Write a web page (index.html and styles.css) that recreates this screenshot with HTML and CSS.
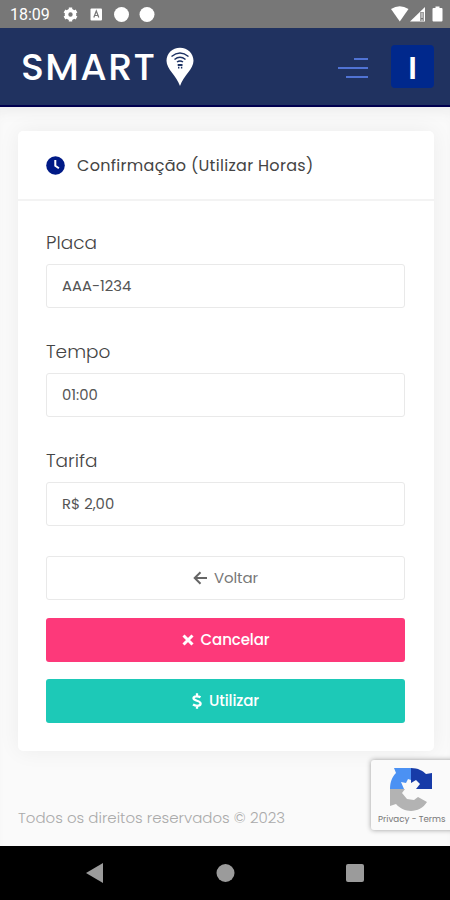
FILE: index.html
```
<!DOCTYPE html>
<html lang="pt-BR">
<head>
<meta charset="utf-8">
<title>Smart - Utilizar Horas</title>
<link rel="stylesheet" href="styles.css">
</head>
<body>
<div class="statusbar">
	<span class="clock">18:09</span>
	<svg class="status-left" width="96" height="28" viewBox="0 0 96 28" fill="#fff">
		<circle cx="10.500" cy="14.500" r="4" fill="none" stroke="#fff" stroke-width="3.600"/>
		<path d="M10.500 7.500v2.500M10.500 19v2.500M4.500 11l2 1.200M14.500 16.800l2 1.200M4.500 18l2-1.200M14.500 12.200l2-1.200" stroke="#fff" stroke-width="3.400"/>
		<rect x="30.500" y="8.500" width="11.500" height="12" rx="1"/>
		<path d="M33.800 17.500l2.500-6.500 2.500 6.500M34.600 15.500h3.400" fill="none" stroke="#777" stroke-width="1.200"/>
		<circle cx="61.500" cy="14.500" r="7.500"/>
		<circle cx="87" cy="14.500" r="7.500"/>
	</svg>
	<svg class="status-right" width="54" height="28" viewBox="0 0 54 28" fill="#fff">
		<path d="M0 9Q8.800 3.500 17.500 9L8.800 21.500z"/>
		<path d="M19 21.500L34 7v14.500z"/>
		<path d="M29.300 12h3.400v9h-3.400z" fill="#777"/>
		<path d="M31 12.500v5.500M31 19.300v1.700" stroke="#fff" stroke-width="1"/>
		<path d="M42.500 8h2V6.500h4V8h2q1 0 1 1v11.500q0 1-1 1h-8q-1 0-1-1V9q0-1 1-1z"/>
	</svg>
</div>

<div class="topbar">
	<span class="brand">SMART</span>
	<svg class="pin" width="28" height="40" viewBox="0 0 28 40">
		<path d="M14 .7C6.300.7.500 6.400.500 13.800.500 22.300 10.300 28.500 14 39c3.700-10.500 13.500-16.700 13.500-25.200C27.500 6.400 21.700.7 14 .7z" fill="#fff"/>
		<path d="M5.500 9.500q8.500-7 17 0M8.500 12.500q5.500-4.500 11 0M11 15q3-2.200 6 0" fill="none" stroke="#1d3263" stroke-width="1.500"/>
		<path d="M11.700 18h4.800M12 20.700h1.400M14.900 20.700h1.400" stroke="#1d3263" stroke-width="1.800"/>
	</svg>
	<svg class="menu" width="30" height="24" viewBox="0 0 30 24" stroke="#5073d4" stroke-width="2">
		<path d="M16 3h14M0 12h30M8 21h22"/>
	</svg>
	<span class="user">I</span>
</div>

<div class="content">
	<div class="card">
		<div class="card-title">
			<svg width="19" height="19" viewBox="0 0 19 19">
				<circle cx="9.500" cy="9.500" r="9.300" fill="#001a86"/>
				<path d="M9.300 4v5.700l3.600 2.600" fill="none" stroke="#fff" stroke-width="2"/>
			</svg>
			<span>Confirmação (Utilizar Horas)</span>
		</div>
		<div class="card-body">
			<label class="label">Placa</label>
			<div class="field">AAA-1234</div>
			<label class="label">Tempo</label>
			<div class="field">01:00</div>
			<label class="label">Tarifa</label>
			<div class="field">R$ 2,00</div>

			<a class="btn back">
				<svg width="14" height="14" viewBox="0 0 14 14" fill="none" stroke="#666" stroke-width="2"><path d="M7.500 1.200L1.700 7l5.800 5.800M2 7h12"/></svg>
				<span>Voltar</span>
			</a>
			<a class="btn cancel">
				<svg width="12" height="12" viewBox="0 0 12 12" stroke="#fff" stroke-width="3"><path d="M1.500 1.500l9 9M10.500 1.500l-9 9"/></svg>
				<span>Cancelar</span>
			</a>
			<a class="btn use">
				<svg width="10" height="16" viewBox="0 0 10 16" fill="none" stroke="#fff" stroke-width="2.300"><path d="M8.500 4.300C6.500 3 1.500 2.600 1.500 5.300 1.500 8.200 8.600 7.300 8.600 10.500 8.600 13.500 3.500 13.200 1 11.500M5 .3v3M5 12.700v3"/></svg>
				<span>Utilizar</span>
			</a>
		</div>
	</div>
	<p class="copyright">Todos os direitos reservados © 2023</p>
</div>

<div class="recaptcha">
	<svg width="44" height="44" viewBox="0 0 44 44">
		<path d="M1 22C1 15 3 10 7 6L5 1h17v12l-3-1-2 4-5-1 3 7z" fill="#4b91f3"/>
		<path d="M22 1c7 0 12 3 15 6l6-1v16H27l4-5-4-4-5 3z" fill="#173ba8"/>
		<path d="M1 22h15l-3 4 5 6 7 1 4-3 9 5c-7 11-22 12-31 2l-6 2z" fill="#b3b3b3"/>
	</svg>
	<span>Privacy - Terms</span>
</div>

<div class="navbar">
	<svg width="450" height="54" viewBox="0 0 450 54" fill="#9b9b9b">
		<path d="M86 27l17-10v20z"/>
		<circle cx="225.500" cy="27" r="9"/>
		<rect x="346" y="18" width="18" height="18" rx="2"/>
	</svg>
</div>
</body>
</html>
```

FILE: styles.css
```
* {
	box-sizing: border-box;
}
body {
	margin: 0;
	height: 900px;
	overflow: hidden;
	display: flex;
	flex-direction: column;
	font-family: Poppins, Inter, "Open Sans", sans-serif;
	background: #fafafa;
	color: #555;
}
svg {
	display: block;
	flex: none;
}

.statusbar {
	height: 28px;
	flex: none;
	background: #777;
	color: #fff;
	display: flex;
	align-items: center;
	padding: 0 8px 0 10px;
}
.clock {
	width: 50px;
	font: 16px/28px Roboto, sans-serif;
	padding-top: 2px;
}
.status-right {
	margin-left: auto;
	margin-right: -3px;
}

.topbar {
	height: 79px;
	flex: none;
	background: #203260;
	border-bottom: 2px solid #00004f;
	display: flex;
	align-items: center;
	padding: 0 16px 0 21px;
}
.brand {
	width: 145px;
	color: #fff;
	font-size: 38px;
	font-weight: 500;
	line-height: 40px;
	letter-spacing: 1.4px;
	padding-top: 1px;
}
.menu {
	margin-left: auto;
	margin-right: 23px;
	position: relative;
	top: 1px;
}
.user {
	width: 43px;
	height: 43px;
	border-radius: 4px;
	background: #00288c;
	color: #fff;
	font-size: 31px;
	font-weight: 600;
	line-height: 46px;
	text-align: center;
}

.content {
	flex: 1;
	padding: 24px 16px 0 18px;
	box-shadow: inset 0 12px 12px -6px #efefef;
}
.card {
	height: 620px;
	border-radius: 5px;
	background: #fff;
	box-shadow: 0 0 22px rgba(0, 0, 0, .06);
}
.card-title {
	height: 70px;
	border-bottom: 2px solid #f3f3f3;
	display: flex;
	align-items: center;
	gap: 12px;
	padding-left: 28px;
	color: #444;
	font-size: 16px;
	letter-spacing: .3px;
}
.card-body {
	padding: 28px 29px 0 28px;
}
.label {
	display: block;
	height: 35px;
	line-height: 27px;
	font-size: 18.500px;
	font-weight: 300;
	color: #444;
}
.field {
	height: 44px;
	margin-bottom: 30px;
	border: 1.500px solid #e9e9e9;
	border-radius: 3px;
	padding-left: 15px;
	font-size: 14.800px;
	line-height: 41px;
}
.btn {
	height: 44px;
	margin-bottom: 17.500px;
	border-radius: 3px;
	display: flex;
	align-items: center;
	justify-content: center;
	gap: 7px;
	color: #fff;
	font-size: 15px;
	font-weight: 500;
	line-height: 42px;
	letter-spacing: -.1px;
}
.back {
	border: 1.500px solid #e9e9e9;
	color: #777;
	font-weight: 400;
}
.cancel {
	background: #fd397a;
}
.use {
	background: #1dc9b7;
}
.copyright {
	margin: 54px 0 0;
	font-size: 15px;
	font-weight: 300;
	line-height: 26px;
	color: #aaa;
}

.recaptcha {
	position: absolute;
	top: 760px;
	left: 371px;
	width: 90px;
	height: 70px;
	border-radius: 3px;
	background: #fafafa;
	box-shadow: 0 0 5px #999;
	padding: 7px 0 0 7px;
	font-size: 8.700px;
	line-height: 17px;
	white-space: nowrap;
	color: #777;
}
.recaptcha svg {
	margin-left: 11px;
}

.navbar {
	height: 54px;
	flex: none;
	background: #000;
}
```
